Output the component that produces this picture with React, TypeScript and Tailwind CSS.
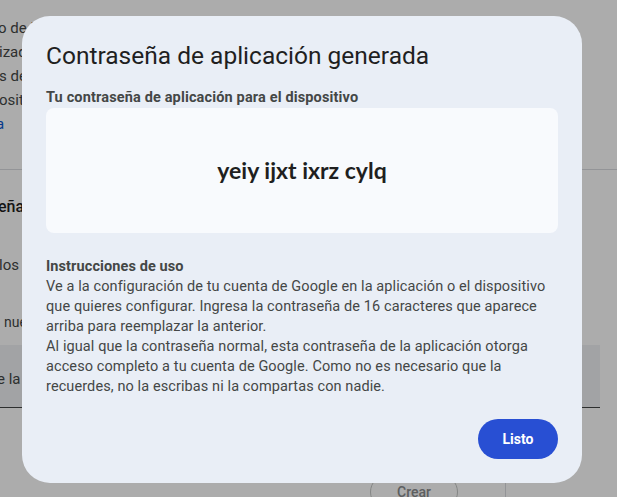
import React from "react";

function BackgroundPage() {
    return (
        <div className="flex flex-col text-[15px] text-[#1f1f1f]">
            {/* Intro paragraph, mostly hidden behind the dialog */}
            <div className="flex flex-col whitespace-nowrap pt-[16px] leading-6 text-[#444746]">
                <span className="-ml-[2px]">o de la página de seguridad</span>
                <span className="-ml-[1px]">izados que no admiten</span>
                <span className="-ml-[1px]">s de seguridad modernos.</span>
                <span className="-ml-[1px]">ositar la contraseña</span>
                <span className="-ml-[4px] text-[#0b57d0]">a</span>
            </div>

            <div className="mt-[33px] border-b border-[#dadce0]" />

            <div className="mt-[25px] whitespace-nowrap text-[16px] font-medium leading-6">
                <span className="-ml-[2px]">eña de aplicación</span>
            </div>
            <div className="mt-[34px] whitespace-nowrap leading-6 text-[#444746]">
                <span className="-ml-[1px]">los dispositivos</span>
            </div>
            <div className="mt-[33px] whitespace-nowrap text-[14px] leading-6 text-[#444746]">
                <span className="ml-[4px]">nueva contraseña</span>
            </div>

            {/* Filled text field */}
            <div className="mt-[11px] flex h-[63px] w-[600px] shrink-0 items-end border-b border-[#444746] bg-[#f0f2f5] pb-[17px]">
                <span className="-ml-[3px] whitespace-nowrap text-[#444746]">e la app</span>
            </div>

            <div className="mt-[66px] flex shrink-0">
                <div className="ml-[370px] flex h-[36px] w-[88px] items-center justify-center rounded-full border border-[#c4c7c5] text-[14px] font-medium text-[#8a8d8f]">
                    Crear
                </div>
                <div className="ml-[47px] w-px bg-[#dadce0]" />
            </div>
        </div>
    );
}

function AppPasswordDialog() {
    return (
        <div className="flex h-[467px] w-[560px] flex-col rounded-[28px] bg-[#e9eef6] px-6 pb-6 pt-6">
            <h1 className="text-[24.5px] leading-8 text-[#1f1f1f]">
                Contraseña de aplicación generada
            </h1>

            <p className="mt-4 text-[14.5px] font-bold leading-5 tracking-[0.15px] text-[#444746]">
                Tu contraseña de aplicación para el dispositivo
            </p>

            {/* Password */}
            <div className="flex h-[125px] items-center justify-center rounded-lg bg-[#f8fafd]">
                <span className="font-['Lato',sans-serif] text-[23px] font-bold text-[#1f1f1f]">
                    yeiy ijxt ixrz cylq
                </span>
            </div>

            {/* Instructions */}
            <div className="mt-6 whitespace-nowrap text-[14.5px] leading-5 tracking-[0.1px] text-[#444746]">
                <p className="font-bold">Instrucciones de uso</p>
                <p>
                    Ve a la configuración de tu cuenta de Google en la aplicación o el dispositivo
                    <br />
                    que quieres configurar. Ingresa la contraseña de 16 caracteres que aparece
                    <br />
                    arriba para reemplazar la anterior.
                </p>
                <p>
                    Al igual que la contraseña normal, esta contraseña de la aplicación otorga
                    <br />
                    acceso completo a tu cuenta de Google. Como no es necesario que la
                    <br />
                    recuerdes, no la escribas ni la compartas con nadie.
                </p>
            </div>

            <div className="mt-auto flex justify-end">
                <button className="h-10 w-20 rounded-full bg-[#284fd3] text-[14px] font-bold text-white">
                    Listo
                </button>
            </div>
        </div>
    );
}

export default function App() {
    return (
        <div className="relative h-[497px] w-[617px] overflow-hidden bg-white font-['Roboto','Liberation_Sans',sans-serif]">
            <BackgroundPage />

            {/* Scrim */}
            <div className="absolute inset-0 bg-black/[0.325]" />

            {/* Dialog */}
            <div className="absolute left-[22px] top-4">
                <AppPasswordDialog />
            </div>
        </div>
    );
}
